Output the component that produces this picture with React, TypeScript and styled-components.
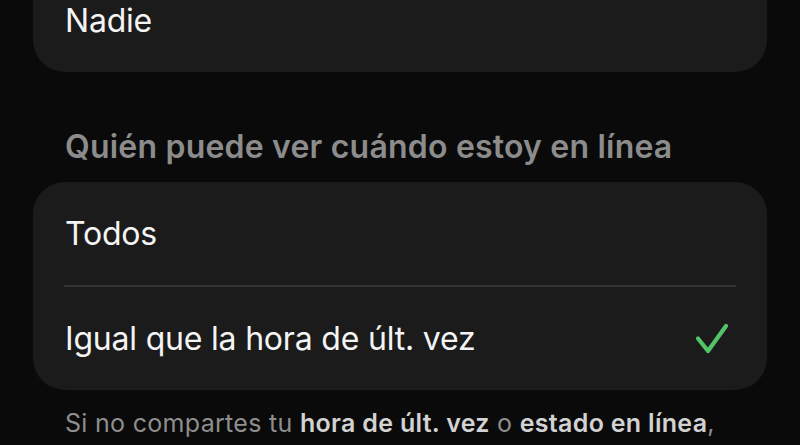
import React from 'react';
import styled, { createGlobalStyle } from 'styled-components';

const GlobalStyle = createGlobalStyle`
  html, body {
    margin: 0;
    padding: 0;
    background: #0a0a0a;
    overflow: hidden;
  }
  body {
    font-family: Inter, "Noto Sans", "Liberation Sans", sans-serif;
    -webkit-font-smoothing: antialiased;
  }
`;

const Screen = styled.div`
  width: 800px;
  height: 445px;
  overflow: hidden;
  background: #0a0a0a;
  display: flex;
  flex-direction: column;
  padding: 0 33px;
  box-sizing: border-box;
`;

const Group = styled.div<{ $offset?: number }>`
  background: #1b1b1b;
  border-radius: 32px;
  display: flex;
  flex-direction: column;
  margin-top: ${({ $offset = 0 }) => $offset}px;
  flex-shrink: 0;
`;

const Row = styled.div`
  height: 103px;
  display: flex;
  align-items: center;
  justify-content: space-between;
  padding: 0 38px 0 32px;
  box-sizing: border-box;
`;

const Divider = styled.div`
  height: 2px;
  background: #343434;
  margin: 0 31px 0 31px;
`;

const Label = styled.span`
  color: #f4f4f4;
  font-size: 32px;
  letter-spacing: -0.2px;
`;

const SectionTitle = styled.h2`
  margin: 0;
  padding: 56px 32px 16px;
  color: #8c8c8c;
  font-size: 32px;
  font-weight: 600;
  line-height: 38px;
  letter-spacing: 0.2px;
`;

const Footnote = styled.p`
  margin: 0;
  padding: 18px 32px 0;
  color: #8e8e8e;
  font-size: 25px;
  line-height: 30px;
  letter-spacing: 0.3px;
  white-space: nowrap;

  b {
    color: #d2d2d2;
    font-weight: 600;
  }
`;

const Check = () => (
  <svg width="34" height="32" viewBox="0 0 34 32" fill="none">
    <path
      d="M3 15.5 L13 28 L31 3"
      stroke="#52c467"
      strokeWidth="4.2"
      strokeLinecap="round"
      strokeLinejoin="round"
    />
  </svg>
);

const options = [
  { id: 'all', label: 'Todos' },
  { id: 'same', label: 'Igual que la hora de últ. vez' },
];

export default function App() {
  const selected = 'same';
  return (
    <>
      <GlobalStyle />
      <Screen>
        <Group $offset={-31}>
          <Row>
            <Label>Nadie</Label>
          </Row>
        </Group>

        <SectionTitle>Quién puede ver cuándo estoy en línea</SectionTitle>

        <Group>
          {options.map((o, i) => (
            <React.Fragment key={o.id}>
              {i > 0 && <Divider />}
              <Row>
                <Label>{o.label}</Label>
                {o.id === selected && <Check />}
              </Row>
            </React.Fragment>
          ))}
        </Group>

        <Footnote>
          Si no compartes tu <b>hora de últ. vez</b> o <b>estado en línea</b>,
        </Footnote>
      </Screen>
    </>
  );
}
